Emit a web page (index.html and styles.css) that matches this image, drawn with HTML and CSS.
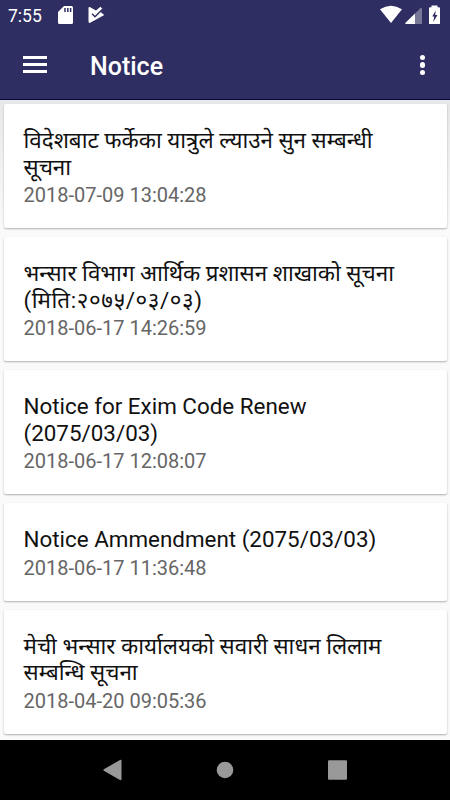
FILE: index.html
```html
<!DOCTYPE html>
<html lang="ne">

<head>
    <meta charset="UTF-8">
    <meta name="viewport" content="width=device-width, initial-scale=1.0">
    <title>Notice</title>
    <link rel="stylesheet" href="styles.css">
</head>

<body>
    <header>
        <div class="status-bar">
            <span class="clock">7:55</span>
            <svg class="sd-card" width="16" height="20" viewBox="0 0 16 20">
                <path fill="#fff" d="M6 1h7.500q1.500 0 1.500 1.500v15q0 1.500-1.500 1.500h-12q-1.500 0-1.500-1.500v-10.500z" />
                <path stroke="#2f2e62" stroke-width="1.500" d="M7 3v4M9.800 3v4M12.600 3v4" />
            </svg>
            <svg class="play-check" width="18" height="20" viewBox="0 0 18 20">
                <path fill="#fff" d="M.500 3.200Q.500 1.400 2.200 2.200L8 5.500 12.400 1.800 14.500 4 12.800 7.300 16.300 10 2.200 17.800Q.500 18.400.500 16.500z" />
                <path fill="none" stroke="#2f2e62" stroke-width="1.500" d="M4 8.800l3 3 7.500-7.500" />
            </svg>
            <div class="status-icons">
                <svg width="62" height="22" viewBox="0 0 62 22">
                    <path fill="#fff" d="M0 7.300Q11 .300 22 7.300L11 21z" />
                    <path fill="#fff" fill-opacity=".35" d="M35 11.500l5.500-5.300q1.500-1.100 1.500.800v15h-7z" />
                    <path fill="#fff" d="M35 11.500v10.500h-9.200q-1.300-.300-.300-1.300z" />
                    <path fill="#fff" d="M51.500 3.500h6v1.800h1.500q1 0 1 1v15q0 1-1 1h-9q-1 0-1-1v-15q0-1 1-1h1.500z" />
                    <path fill="#2f2e62" d="M55.800 8.500l-3.600 6h2l-.900 5.500 4.200-7h-2.300z" />
                </svg>
            </div>
        </div>
        <div class="toolbar">
            <div class="menu"><span></span><span></span><span></span></div>
            <h1>Notice</h1>
            <div class="more"><span></span><span></span><span></span></div>
        </div>
    </header>

    <main>
        <div class="card">
            <h2>विदेशबाट फर्केका यात्रुले ल्याउने सुन सम्बन्धी<br>सूचना</h2>
            <p>2018-07-09 13:04:28</p>
        </div>
        <div class="card">
            <h2>भन्सार विभाग आर्थिक प्रशासन शाखाको सूचना<br><span class="miti">(मिति:२०७५/०३/०३)</span></h2>
            <p>2018-06-17 14:26:59</p>
        </div>
        <div class="card">
            <h2>Notice for Exim Code Renew<br>(2075/03/03)</h2>
            <p>2018-06-17 12:08:07</p>
        </div>
        <div class="card">
            <h2>Notice Ammendment (2075/03/03)</h2>
            <p>2018-06-17 11:36:48</p>
        </div>
        <div class="card">
            <h2>मेची भन्सार कार्यालयको सवारी साधन लिलाम<br>सम्बन्धि सूचना</h2>
            <p>2018-04-20 09:05:36</p>
        </div>
    </main>

    <nav>
        <svg width="450" height="60" viewBox="0 0 450 60">
            <path fill="#999" d="M103.800 29.200q-.800.800 0 1.600L120 40q1.500.600 1.500-1V21q0-1.600-1.500-1z" />
            <circle cx="225" cy="30" r="8.300" fill="#999" />
            <rect x="328" y="20.300" width="19" height="19.400" rx="1" fill="#999" />
        </svg>
    </nav>
</body>

</html>
```
FILE: styles.css
```css
body {
    font-family: Roboto, "Noto Sans Devanagari", "Noto Sans", sans-serif;
    background-color: #fafafa;
    margin: 0;
    height: 800px;
    display: flex;
    flex-direction: column;
    overflow: hidden;
}

header {
    box-sizing: border-box;
    height: 100px;
    background-color: #2f2e62;
    border-bottom: 1px solid #08063c;
    color: white;
}

.status-bar {
    display: flex;
    height: 30px;
    padding-left: 8px;
}

.clock {
    width: 50px;
    font-size: 17.5px;
    line-height: 32px;
}

.sd-card {
    margin-top: 5px;
}

.play-check {
    margin: 5px 0 0 14px;
}

.status-icons {
    margin: 2px 8px 0 auto;
}

.toolbar {
    display: flex;
    align-items: center;
    height: 70px;
    padding: 0 25px 0 23px;
}

.menu {
    display: flex;
    flex-direction: column;
    gap: 4px;
    width: 67px;
    margin-top: -1px;
}

.menu span {
    width: 24px;
    height: 3px;
    background-color: white;
}

h1 {
    flex: 1;
    margin: 2px 0 0;
    font-size: 25px;
    font-weight: 500;
}

.more {
    display: flex;
    flex-direction: column;
    gap: 2px;
}

.more span {
    width: 5.5px;
    height: 5.5px;
    border-radius: 50%;
    background-color: white;
}

main {
    box-sizing: border-box;
    display: flex;
    flex-direction: column;
    gap: 9px;
    height: 640px;
    padding: 4.3px 3.5px 0;
    background: linear-gradient(#e8e8e8, #fafafa 130px);
}

.card {
    padding: 22.8px 20px 20.9px;
    background-color: #fff;
    border-radius: 2px;
    box-shadow: 0 1px 2px rgba(0, 0, 0, 0.3);
}

h2 {
    margin: 0;
    font-size: 22.4px;
    font-weight: 400;
    line-height: 26.5px;
    color: #111;
    white-space: nowrap;
}

.miti {
    letter-spacing: 0.6px;
}

.card p {
    margin: 3.3px 0 0;
    font-size: 20px;
    line-height: 24px;
    color: #666;
}

nav {
    height: 60px;
    background-color: #000;
}
```
